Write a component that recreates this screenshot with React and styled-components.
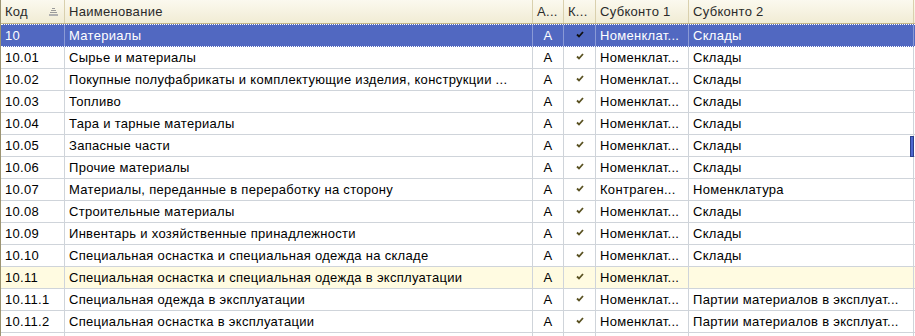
import React from 'react';
import styled, { createGlobalStyle, css } from 'styled-components';

const GlobalStyle = createGlobalStyle`
  html, body {
    margin: 0;
    padding: 0;
    background: #ffffff;
  }
  body {
    font-family: "Liberation Sans", Arial, sans-serif;
    font-size: 13px;
    letter-spacing: 0.3px;
    color: #000;
  }
`;

const columns = '64px 468px 31px 32px 93px 225px';

const Table = styled.div`
  width: 915px;
  height: 336px;
  overflow: hidden;
  box-sizing: border-box;
  border-left: 1px solid #9c9472;
`;

const HeaderRow = styled.div`
  display: grid;
  grid-template-columns: ${columns};
  height: 24px;
  box-sizing: border-box;
  background: linear-gradient(#fbf9ef, #f1ecd4);
  border-bottom: 1px solid #c2b58a;
`;

const HeadCell = styled.div`
  display: flex;
  align-items: center;
  justify-content: space-between;
  padding: 0 6px 0 4px;
  box-sizing: border-box;
  border-right: 1px solid #d9d0ae;
  color: #2a2a2a;
  white-space: nowrap;
  overflow: hidden;
`;

const Row = styled.div`
  position: relative;
  display: grid;
  grid-template-columns: ${columns};
  height: 22px;
  box-sizing: border-box;
  border-bottom: 1px solid #cfd4da;
  background: #fff;
  ${({ $variant }) =>
    $variant === 'selected' &&
    css`
      background: #5168c1;
      color: #fff;
      height: 23px;
      border-top: 1px dotted #fff;
      border-bottom: 1px dotted #fff;
    `}
  ${({ $variant }) =>
    $variant === 'group' &&
    css`
      background: #fffbe1;
    `}
`;

const Cell = styled.div`
  display: flex;
  align-items: center;
  justify-content: ${({ $center }) => ($center ? 'center' : 'flex-start')};
  padding: 0 4px;
  box-sizing: border-box;
  border-right: 1px solid ${({ $sel }) => ($sel ? '#8a9ad6' : '#cfd4da')};
  white-space: nowrap;
  overflow: hidden;
  min-width: 0;
`;

const Marker = styled.div`
  position: absolute;
  right: 1px;
  top: 1px;
  width: 2px;
  height: 19px;
  background: #4f68d0;
  border: 1px solid #2d3f8a;
`;

const SortIcon = () => (
  <svg width="9" height="8" viewBox="0 0 9 8">
    <rect x="3" y="0" width="3" height="1" fill="#9a9a9a" />
    <rect x="2" y="2" width="5" height="1" fill="#9a9a9a" />
    <rect x="1" y="4" width="7" height="1" fill="#9a9a9a" />
    <rect x="0" y="6" width="9" height="2" fill="#b0b0b0" />
  </svg>
);

const Check = ({ dark }) => (
  <svg width="8" height="7" viewBox="0 0 8 7" style={{ marginTop: -3 }}>
    <path
      d="M1 3.5 L3 5.5 L7 1"
      fill="none"
      stroke={dark ? '#101010' : '#5a5222'}
      strokeWidth="1.8"
    />
  </svg>
);

const NOM = 'Номенклат...';
const PART = 'Партии материалов в эксплуат...';

const rows = [
  ['10', 'Материалы', NOM, 'Склады', 'selected'],
  ['10.01', 'Сырье и материалы', NOM, 'Склады'],
  ['10.02', 'Покупные полуфабрикаты и комплектующие изделия, конструкции ...', NOM, 'Склады'],
  ['10.03', 'Топливо', NOM, 'Склады'],
  ['10.04', 'Тара и тарные материалы', NOM, 'Склады'],
  ['10.05', 'Запасные части', NOM, 'Склады', 'marker'],
  ['10.06', 'Прочие материалы', NOM, 'Склады'],
  ['10.07', 'Материалы, переданные в переработку на сторону', 'Контраген...', 'Номенклатура'],
  ['10.08', 'Строительные материалы', NOM, 'Склады'],
  ['10.09', 'Инвентарь и хозяйственные принадлежности', NOM, 'Склады'],
  ['10.10', 'Специальная оснастка и специальная одежда на складе', NOM, 'Склады'],
  ['10.11', 'Специальная оснастка и специальная одежда в эксплуатации', NOM, '', 'group'],
  ['10.11.1', 'Специальная одежда в эксплуатации', NOM, PART],
  ['10.11.2', 'Специальная оснастка в эксплуатации', NOM, PART],
  ['', '', '', '', 'empty'],
];

export default function App() {
  return (
    <>
      <GlobalStyle />
      <Table>
        <HeaderRow>
          <HeadCell>
            Код
            <SortIcon />
          </HeadCell>
          <HeadCell>Наименование</HeadCell>
          <HeadCell>А...</HeadCell>
          <HeadCell>К...</HeadCell>
          <HeadCell>Субконто 1</HeadCell>
          <HeadCell>Субконто 2</HeadCell>
        </HeaderRow>
        {rows.map(([code, name, sub1, sub2, kind], i) => {
          const sel = kind === 'selected';
          const empty = kind === 'empty';
          return (
            <Row key={i} $variant={kind}>
              <Cell $sel={sel}>{code}</Cell>
              <Cell $sel={sel}>{name}</Cell>
              <Cell $sel={sel} $center>{empty ? '' : 'А'}</Cell>
              <Cell $sel={sel} $center>{empty ? null : <Check dark={sel} />}</Cell>
              <Cell $sel={sel}>{sub1}</Cell>
              <Cell $sel={sel}>{sub2}</Cell>
              {kind === 'marker' && <Marker />}
            </Row>
          );
        })}
      </Table>
    </>
  );
}
